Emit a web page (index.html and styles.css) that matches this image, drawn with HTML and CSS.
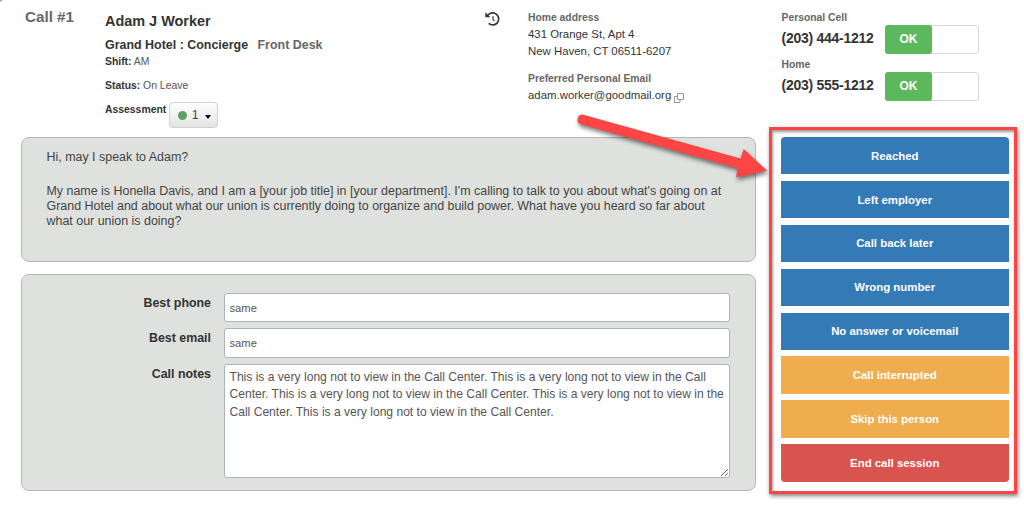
FILE: index.html
```html
<!DOCTYPE html>
<html lang="en">
<head>
<meta charset="utf-8">
<title>Call Center</title>
<link rel="stylesheet" href="styles.css">
</head>
<body>
<div class="page">
  <header class="header">
    <div class="call-number">Call #1</div>
    <div class="person">
      <div class="name">Adam J Worker</div>
      <div class="job">Grand Hotel : Concierge <span class="dept">Front Desk</span></div>
      <div class="shift"><b>Shift:</b> AM</div>
      <div class="status"><b>Status:</b> On Leave</div>
      <div class="assessment"><b>Assessment</b>
        <button class="rating"><i class="dot"></i><span>1</span><i class="caret"></i></button>
      </div>
    </div>
    <svg class="history" viewBox="0 0 16 16" width="16" height="16">
      <path d="M3 4.2A6 6 0 1 1 3.7 12.4" fill="none" stroke="#333" stroke-width="1.7"/>
      <path d="M.3 1.2V6.3H5.4z" fill="#333"/>
      <path d="M8 5V8.4L9.5 9.8" fill="none" stroke="#333" stroke-width="1.1"/>
    </svg>
    <div class="contact">
      <div class="label">Home address</div>
      <div class="line">431 Orange St, Apt 4</div>
      <div class="line">New Haven, CT 06511-6207</div>
      <div class="label email-label">Preferred Personal Email</div>
      <div class="line">adam.worker@goodmail.org
        <svg class="copy" viewBox="0 0 10 10" width="10" height="10" fill="#fff" stroke="#8b979c"><path d="M.5 3.5h5.5v6H.5z"/><path d="M3.5.5h6v6h-6z"/></svg>
      </div>
    </div>
    <div class="phones">
      <div class="label">Personal Cell</div>
      <div class="phone-row"><span class="phone">(203) 444-1212</span><span class="toggle"><span>OK</span></span></div>
      <div class="label">Home</div>
      <div class="phone-row"><span class="phone">(203) 555-1212</span><span class="toggle"><span>OK</span></span></div>
    </div>
  </header>
  <div class="body">
    <main class="main">
      <section class="panel script">
        <p>Hi, may I speak to Adam?</p>
        <p>My name is Honella Davis, and I am a [your job title] in [your department]. I'm calling to talk to you about what's going on at<br>Grand Hotel and about what our union is currently doing to organize and build power. What have you heard so far about<br>what our union is doing?</p>
      </section>
      <section class="panel form">
        <label for="phone">Best phone</label><input id="phone" value="same">
        <label for="email">Best email</label><input id="email" value="same">
        <label for="notes">Call notes</label><textarea id="notes">This is a very long not to view in the Call Center. This is a very long not to view in the Call
Center. This is a very long not to view in the Call Center. This is a very long not to view in the
Call Center. This is a very long not to view in the Call Center.</textarea>
      </section>
    </main>
    <nav class="outcomes">
      <button>Reached</button>
      <button>Left employer</button>
      <button>Call back later</button>
      <button>Wrong number</button>
      <button>No answer or voicemail</button>
      <button class="warn">Call interrupted</button>
      <button class="warn">Skip this person</button>
      <button class="danger">End call session</button>
    </nav>
  </div>
  <svg class="arrow" viewBox="0 0 1024 508" width="1024" height="508">
    <path d="M583.3 114.7 740.5 158.5 743.7 149 767.3 170.7 736 177.3 737.7 168.3 580.7 124.3A5 5 0 0 1 583.3 114.7z" fill="#fe4545"/>
  </svg>
  <svg class="corner" viewBox="0 0 4 3" width="4" height="3"><path d="M0 2 3 0H0z" fill="#aaa"/></svg>
</div>
</body>
</html>
```
FILE: styles.css
```css
* { box-sizing: border-box; }
body { margin: 0; background: #fff; overflow: hidden; }
.page { position: relative; width: 1024px; height: 508px; overflow: hidden; font-family: "Liberation Sans", Arial, sans-serif; color: #333; white-space: nowrap; }
button, input, textarea { font-family: inherit; margin: 0; }

.header { display: grid; grid-template-columns: 80px 380px 43px 253.5px 1fr; height: 137px; padding-left: 25px; }
.call-number { margin-top: 7px; font-size: 15.2px; line-height: 20px; font-weight: bold; color: #666; }
.name { margin-top: 11px; font-size: 14.45px; line-height: 20px; font-weight: bold; }
.job { margin-top: 4px; font-size: 12.45px; line-height: 20px; font-weight: bold; }
.dept { margin-left: 6px; color: #666; }
.shift, .status { font-size: 10.4px; line-height: 16px; color: #555; }
.shift b, .status b { color: #333; }
.shift { margin-top: -1px; }
.status { margin-top: 8px; }
.assessment { display: flex; align-items: flex-start; gap: 2.5px; margin-top: 7.5px; font-size: 10.4px; line-height: 15px; }
.rating { display: flex; align-items: center; width: 49px; height: 26px; padding: 0 5px 0 8px; border: 1px solid #d0d0d0; border-radius: 4px; background: linear-gradient(#fff, #e4e4e4); font-size: 12.4px; color: #444; }
.dot { width: 9px; height: 9px; margin: 1px 5px 0 0; border-radius: 50%; background: #5f9f60; }
.caret { margin: 5px 0 0 6px; border: 3.5px solid transparent; border-top: 4px solid #000; border-bottom: 0; }
.history { margin-top: 11px; }
.contact .label, .phones .label { font-size: 10.35px; font-weight: bold; line-height: 16px; color: #666; }
.contact { padding-top: 10px; }
.line { font-size: 11.4px; line-height: 17px; }
.contact .email-label { margin-top: 10.5px; }
.copy { vertical-align: -4px; margin-left: 0; }
.phones { padding-top: 10px; }
.phone-row { display: flex; height: 29px; margin-top: -1px; margin-bottom: 2.7px; }
.phone { width: 103.5px; font-size: 14px; letter-spacing: -.27px; font-weight: bold; line-height: 26px; }
.toggle { display: block; width: 94px; height: 29px; border: 1px solid #d7d7d7; border-radius: 3px; }
.toggle span { display: block; width: 47px; height: 29px; margin: -1px; border-radius: 3px; background: #5cb85c; color: #fff; font-size: 12px; font-weight: bold; line-height: 29px; text-align: center; }

.body { display: flex; padding-left: 21px; }
.main { display: flex; flex-direction: column; gap: 12px; width: 734.5px; }
.panel { border: 1px solid #b4b6b4; border-radius: 8px; background: #dfe1de; }
.script { height: 124.5px; padding: 12px 0 0 24.5px; font-size: 12.44px; line-height: 15px; color: #444; }
.script p { margin: 0 0 19px; }
.form { display: grid; grid-template-columns: 189px 506px; grid-template-rows: 29px 30px 114px; column-gap: 13px; row-gap: 6px; height: 217px; padding-top: 18.5px; }
.form label { font-size: 12.4px; font-weight: bold; line-height: 21px; text-align: right; }
.form input, .form textarea { width: 506px; height: 100%; padding: 0 4.5px; border: 1px solid #a9b3bd; border-radius: 3px; background: #fff; color: #555; font-size: 11.2px; }
.form textarea { padding-top: 4px; font-size: 12.08px; line-height: 17.3px; white-space: pre; overflow: hidden; }

.outcomes { display: grid; grid-auto-rows: 37.3px; row-gap: 6.6px; align-content: start; width: 248px; height: 366.5px; margin: -10px 0 0 13.5px; padding: 7px 5px 0 8.5px; border: 3.5px solid #fe4545; box-shadow: 1px 2px 4px rgba(0,0,0,.5), inset 1px 2px 3px rgba(0,0,0,.4); }
.outcomes button { border: 0; padding: 0; background: #337ab7; color: #fff; font-size: 11.4px; font-weight: bold; }
.outcomes .warn { background: #f0ad4e; }
.outcomes .danger { background: #d9534f; border-radius: 0 0 4px 4px; }
.outcomes button:first-child { border-radius: 4px 4px 0 0; }

.arrow { position: absolute; left: 0; top: 0; pointer-events: none; filter: drop-shadow(1px 3px 2px rgba(0,0,0,.5)); }
.corner { position: absolute; left: 0; top: 0; }
```
